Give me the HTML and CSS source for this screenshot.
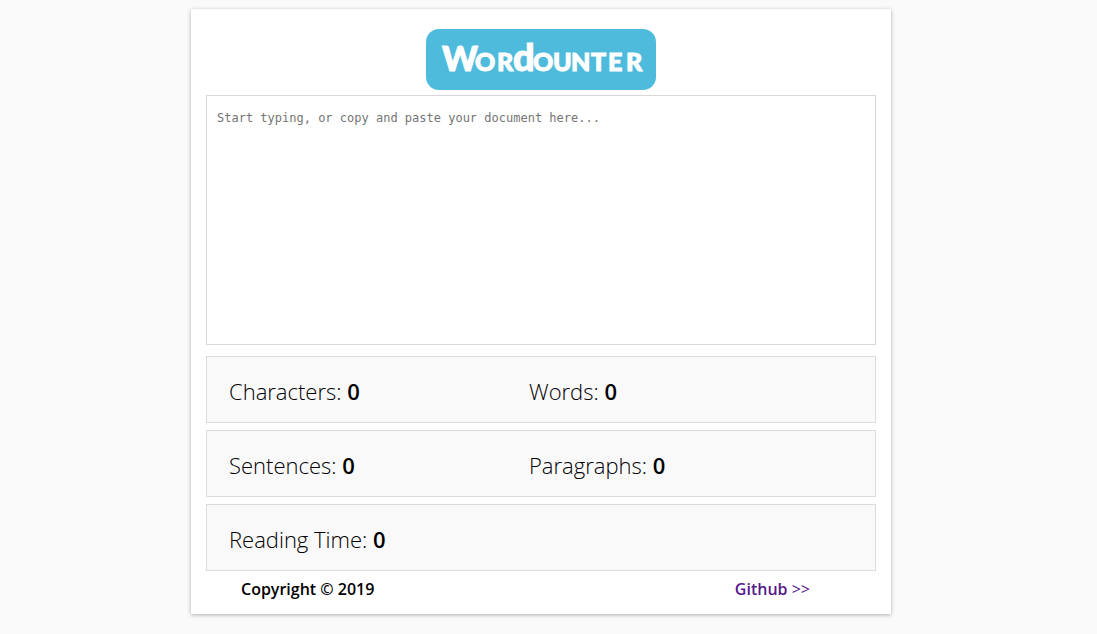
FILE: index.html
```html
<!DOCTYPE html>
<html lang="en">
<head>
<meta charset="utf-8">
<meta name="viewport" content="width=device-width, initial-scale=1">
<title>Wordounter</title>
<link rel="stylesheet" href="styles.css">
</head>
<body>
<main class="card">
  <header class="brand">
    <svg class="logo" viewBox="0 0 230 61" role="img" aria-label="Wordounter">
      <rect class="logo-plate" width="230" height="61" rx="13"/>
      <text class="logo-text" y="42" x="16 49 71 87 107 127 145 165 182 200"><tspan class="logo-cap">W</tspan>OR<tspan class="logo-stem">d</tspan>OUNTER</text>
    </svg>
  </header>
  <textarea class="editor" aria-label="Document" placeholder="Start typing, or copy and paste your document here..."></textarea>
  <section class="stats">
    <div class="row"><p class="stat">Characters: <b>0</b></p><p class="stat">Words: <b>0</b></p></div>
    <div class="row"><p class="stat">Sentences: <b>0</b></p><p class="stat">Paragraphs: <b>0</b></p></div>
    <div class="row"><p class="stat">Reading Time: <b>0</b></p></div>
  </section>
  <footer class="footer">
    <span>Copyright © 2019</span>
    <a class="link" href="#github">Github <span class="arrows">&gt;&gt;</span></a>
  </footer>
</main>
</body>
</html>
```
FILE: styles.css
```css
* { box-sizing: border-box; }
body {
  margin: 0;
  padding: 9px 15px 20px 0;
  background: #fafafa;
  color: #000;
  font-family: "Open Sans", "Noto Sans", sans-serif;
}
.card {
  max-width: 700px;
  margin: 0 auto;
  padding: 20px 15px 14px;
  background: #fff;
  box-shadow: 0 1px 4px rgba(0, 0, 0, 0.3);
}
.brand { display: flex; justify-content: center; margin-bottom: 5px; }
.logo { display: block; width: 230px; height: 61px; }
.logo-plate { fill: #4fbbdc; }
.logo-text {
  fill: #fff;
  stroke: #fff;
  stroke-width: 1px;
  font-family: Lato, sans-serif;
  font-size: 25px;
  font-weight: 900;
}
.logo-cap { font-size: 34px; }
.logo-stem { font-size: 38px; }
.editor {
  display: block;
  width: 100%;
  height: 250px;
  padding: 15px 10px;
  border: 1px solid #d8d8d8;
  border-radius: 0;
  background: #fff;
  font: 12px/15px "DejaVu Sans Mono", monospace;
  resize: none;
  outline: none;
}
.editor::placeholder { color: #757575; opacity: 1; }
.stats { display: flex; flex-direction: column; gap: 7px; margin-top: 11px; }
.row {
  display: grid;
  grid-template-columns: 300px 1fr;
  padding: 18px 22px 15px;
  border: 1px solid #dcdcdc;
  background: #f9f9f9;
}
.stat { margin: 0; font-size: 22px; line-height: 32px; font-weight: 300; }
.stat b { font-weight: 600; }
.footer {
  display: flex;
  justify-content: space-between;
  padding: 7px 66px 0 35px;
  font-size: 16px;
  line-height: 22px;
  font-weight: 600;
}
.link { color: #551a8b; text-decoration: none; }
.arrows { font-weight: 400; }
```
